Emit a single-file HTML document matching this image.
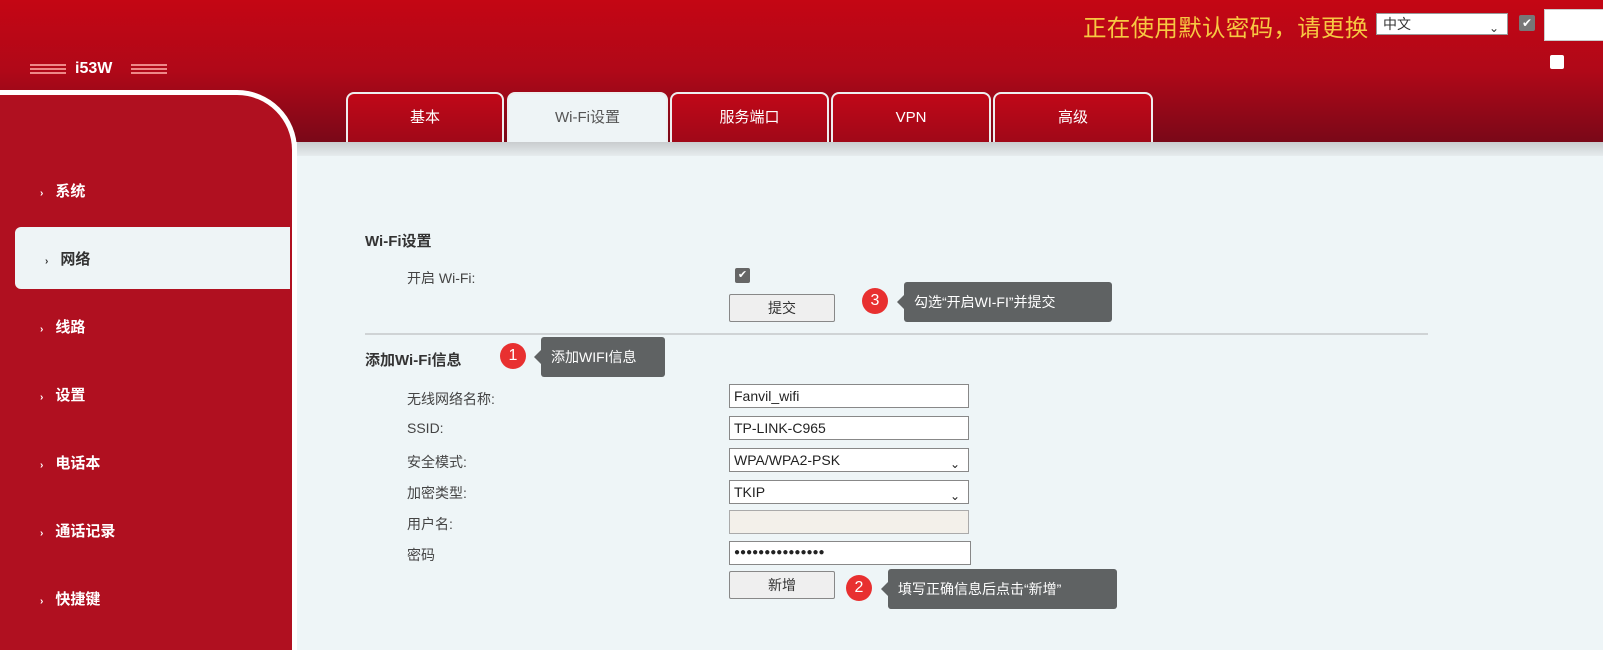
<!DOCTYPE html><html><head><meta charset="utf-8"><style>
*{margin:0;padding:0;box-sizing:border-box}
body{width:1603px;height:623px;overflow:hidden;position:relative;font-family:"Liberation Sans","Noto Sans CJK SC",sans-serif;background:#eef5f7;font-size:14px;color:#333}
.hdr{position:absolute;left:0;top:0;width:1603px;height:142px;background:linear-gradient(#c40614 0%,#b00818 50%,#7a0818 100%)}
.band{position:absolute;left:297px;top:142px;width:1306px;height:14px;background:linear-gradient(#c9ccce,#e6ecee)}
.side{position:absolute;left:-10px;top:90px;width:307px;height:560px;background:#b01020;border:5px solid #fff;border-top-right-radius:60px;border-bottom:none;border-left:none}
.logo{position:absolute;left:75px;top:60px;color:#fff;font-weight:bold;font-size:16px}
.lines{position:absolute;top:64px;width:36px;height:10px;background:repeating-linear-gradient(#e88 0 2px,transparent 2px 4px)}
.warn{position:absolute;left:1083px;top:9px;color:#f7c842;font-size:23.5px;letter-spacing:0.3px}
.sel{position:absolute;left:1376px;top:13px;width:132px;height:22px;background:#fff;border:1px solid #999;font-size:14px;padding-left:6px;line-height:20px}
.tab{position:absolute;top:92px;height:50px;border:2px solid #eee;border-bottom:none;border-radius:8px 8px 0 0;background:linear-gradient(#c00818,#a00818);color:#fff;text-align:center;line-height:48px;font-size:15px}
.tab.on{background:#eef4f6;color:#555}
.nav{position:absolute;left:40px;color:#fff;font-size:15px;font-weight:bold}
.nav b{font-size:10px;margin-right:12px}
.navon{position:absolute;left:15px;top:227px;width:275px;height:62px;background:#eef4f6;border-radius:6px 0 0 6px}
.t{position:absolute;font-size:14px;color:#444}
.h{position:absolute;font-weight:bold;font-size:15px;color:#333}
.in{position:absolute;left:729px;width:240px;height:24px;background:#fff;border:1px solid #888;font-size:14px;padding-left:4px;line-height:22px;color:#222}
.btn{position:absolute;left:729px;width:106px;height:28px;background:#efefef;border:1px solid #888;border-radius:2px;text-align:center;line-height:26px}
.badge{position:absolute;width:26px;height:26px;border-radius:50%;background:#e83030;color:#fff;text-align:center;line-height:26px;font-size:16px}
.tip{position:absolute;background:#5f6263;color:#fff;border-radius:3px;font-size:14px;padding-left:10px;line-height:40px;height:40px}
.tip:before{content:"";position:absolute;left:-7px;top:13px;border:7px solid transparent;border-left:none;border-right-color:#5f6263}
.arr{position:absolute;right:8px;top:4px;font-size:12px}
</style></head><body>
<div class="hdr"></div>
<div class="lines" style="left:30px"></div><div class="logo">i53W</div><div class="lines" style="left:131px"></div>
<div class="warn">正在使用默认密码，请更换</div>
<div class="sel">中文<span class="arr">&#8964;</span></div>
<div style="position:absolute;left:1519px;top:15px;width:16px;height:16px;background:#777;border-radius:2px;color:#fff;font-size:12px;text-align:center;line-height:16px">✔</div>
<div style="position:absolute;left:1544px;top:9px;width:70px;height:32px;background:#fff;border:1px solid #ccc"></div>
<div style="position:absolute;left:1550px;top:55px;width:14px;height:14px;background:#fff;border-radius:2px"></div>
<div class="band"></div>
<div class="side"></div>
<div class="tab" style="left:346px;width:158px">基本</div>
<div class="tab on" style="left:507px;width:161px">Wi-Fi设置</div>
<div class="tab" style="left:670px;width:159px">服务端口</div>
<div class="tab" style="left:831px;width:160px">VPN</div>
<div class="tab" style="left:993px;width:160px">高级</div>
<div class="navon"></div>
<div class="nav" style="top:180px"><b>›</b>系统</div>
<div class="nav" style="top:248px;left:45px;color:#333"><b>›</b>网络</div>
<div class="nav" style="top:316px"><b>›</b>线路</div>
<div class="nav" style="top:384px"><b>›</b>设置</div>
<div class="nav" style="top:452px"><b>›</b>电话本</div>
<div class="nav" style="top:520px"><b>›</b>通话记录</div>
<div class="nav" style="top:588px"><b>›</b>快捷键</div>
<div class="h" style="left:365px;top:230px">Wi-Fi设置</div>
<div class="t" style="left:407px;top:268px">开启 Wi-Fi:</div>
<div style="position:absolute;left:735px;top:268px;width:15px;height:15px;background:#666;border-radius:2px;color:#fff;font-size:11px;text-align:center;line-height:15px">✔</div>
<div class="btn" style="top:294px">提交</div>
<div class="badge" style="left:862px;top:288px">3</div>
<div class="tip" style="left:904px;top:282px;width:208px">勾选“开启WI-FI”并提交</div>
<div style="position:absolute;left:365px;top:333px;width:1063px;height:2px;background:#cfd3d5"></div>
<div class="h" style="left:365px;top:349px">添加Wi-Fi信息</div>
<div class="badge" style="left:500px;top:343px">1</div>
<div class="tip" style="left:541px;top:337px;width:124px">添加WIFI信息</div>
<div class="t" style="left:407px;top:389px">无线网络名称:</div>
<div class="t" style="left:407px;top:420px">SSID:</div>
<div class="t" style="left:407px;top:452px">安全模式:</div>
<div class="t" style="left:407px;top:483px">加密类型:</div>
<div class="t" style="left:407px;top:514px">用户名:</div>
<div class="t" style="left:407px;top:545px">密码</div>
<div class="in" style="top:384px">Fanvil_wifi</div>
<div class="in" style="top:416px">TP-LINK-C965</div>
<div class="in" style="top:448px">WPA/WPA2-PSK<span class="arr">&#8964;</span></div>
<div class="in" style="top:480px">TKIP<span class="arr">&#8964;</span></div>
<div class="in" style="top:510px;background:#f3f0ea;border-color:#aaa"></div>
<div class="in" style="top:541px;width:242px;font-size:10px">●●●●●●●●●●●●●●●</div>
<div class="btn" style="top:571px">新增</div>
<div class="badge" style="left:846px;top:575px">2</div>
<div class="tip" style="left:888px;top:569px;width:229px">填写正确信息后点击“新增”</div>
</body></html>
